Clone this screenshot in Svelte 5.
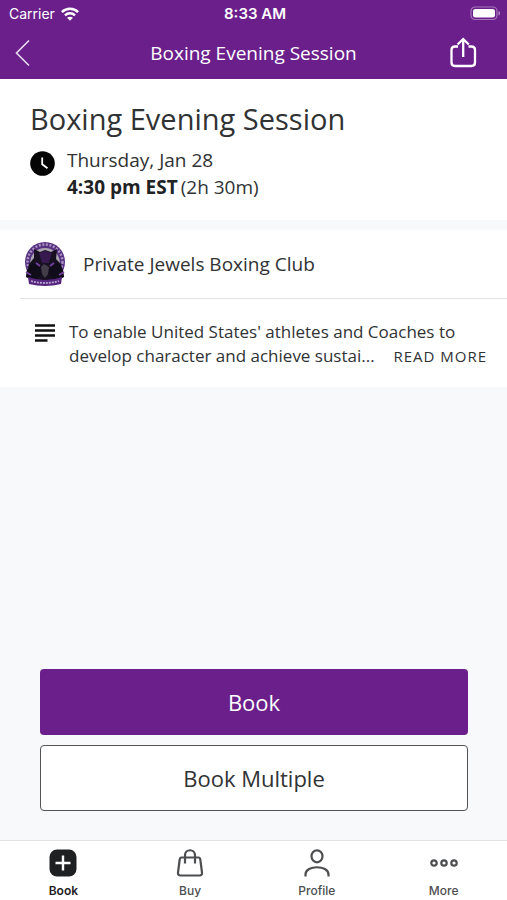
<script>
  let active = $state('Book');
  const tabs = ['Book', 'Buy', 'Profile', 'More'];
</script>

<div class="screen">
  <header>
    <div class="status">
      <div class="carrier">
        <span>Carrier</span>
        <svg width="18" height="14" viewBox="0 0 18 14" aria-hidden="true">
          <g fill="none" stroke="#fff" stroke-width="2.5">
            <path d="M.9 5.1C5.4.6 12.6.6 17.1 5.1" />
            <path d="M4 8.3C6.8 5.6 11.2 5.6 14 8.3" />
          </g>
          <path d="M9 13.7 6.1 10.8C7.7 9.3 10.3 9.3 11.9 10.8Z" fill="#fff" />
        </svg>
      </div>
      <span class="clock">8:33 AM</span>
      <svg class="battery" width="31" height="16" viewBox="0 0 31 16" aria-hidden="true">
        <rect x="1" y="1" width="26" height="12.5" rx="4" fill="none" stroke="#fff" stroke-opacity=".4" stroke-width="1.2" />
        <rect x="3" y="3" width="22" height="8.5" rx="2.3" fill="#fff" />
        <path d="M28.5 5c2 .7 2 3.9 0 4.6Z" fill="#fff" fill-opacity=".5" />
      </svg>
    </div>
    <nav class="bar" aria-label="Page">
      <button class="icon" aria-label="Back">
        <svg width="16" height="28" viewBox="0 0 16 28" aria-hidden="true">
          <path d="M14 1.5 1.5 14 14 26.5" fill="none" stroke="#fff" stroke-opacity=".85" stroke-width="1.6" />
        </svg>
      </button>
      <span class="bar-title">Boxing Evening Session</span>
      <button class="icon share" aria-label="Share">
        <svg width="28" height="32" viewBox="0 0 28 32" aria-hidden="true">
          <path d="M9 9.5H6Q2.5 9.5 2.5 13V25.5Q2.5 29 6 29H22.5Q26 29 26 25.5V13Q26 9.5 22.5 9.5H19.5M14.2 20V2.5M8.6 7.5 14.2 2 19.8 7.5" fill="none" stroke="#fff" stroke-width="2.3" />
        </svg>
      </button>
    </nav>
  </header>

  <main>
    <section class="summary">
      <h1>Boxing Evening Session</h1>
      <div class="when">
        <svg width="25" height="25" viewBox="0 0 25 25" aria-hidden="true">
          <circle cx="12.5" cy="12.5" r="12.3" fill="#050505" />
          <path d="M12.2 6.5V13.3L17.5 17.2" fill="none" stroke="#fff" stroke-width="1.8" />
        </svg>
        <p>Thursday, Jan 28<br /><span class="time"><strong>4:30 pm EST</strong><span>(2h 30m)</span></span></p>
      </div>
    </section>

    <section class="details">
      <div class="club">
        <svg width="42" height="46" viewBox="0 0 42 46" role="img" aria-label="Private Jewels Boxing Club emblem">
          <circle cx="21" cy="21" r="20" fill="#573181" />
          <circle cx="21" cy="21" r="17.5" fill="none" stroke="#a993c0" stroke-width="2.4" stroke-dasharray="2 1.6" />
          <circle cx="21" cy="22" r="15" fill="#aaa5af" />
          <path d="M10 17 10 8 16 11 21 9 27 11 33 8 32 18 37 23 40 36 30 41H12L2 36 5 23Z" fill="#171020" />
          <path d="M15 12 21 10 28 12 25 22H18Z" fill="#35194f" />
          <path d="M3 29 8 22 15 24 18 33 12 38 2 36ZM39 29 34 22 27 24 24 33 30 38 40 36Z" fill="#100c19" />
          <path d="M17 26 20 23 25 26 24 33 21 37 18 33Z" fill="#423d49" />
          <path d="M2 31 7 34M35 34 40 31M12 22 16 25M30 22 26 25" stroke="#7540a0" stroke-width="1.8" />
          <path d="M4 36Q21 42 38 36L37 43Q21 47 5 43Z" fill="#55257f" />
          <path d="M7 40Q21 44 35 40" fill="none" stroke="#b7a2cc" stroke-width="1.8" stroke-dasharray="2 1" />
        </svg>
        <span>Private Jewels Boxing Club</span>
      </div>
      <div class="about">
        <svg width="20" height="19" viewBox="0 0 20 19" aria-hidden="true">
          <path d="M0 1.5H20M0 6.5H20M0 11.5H20M0 16.5H12.5" stroke="#111" stroke-width="2.5" />
        </svg>
        <div class="copy">
          <p>To enable United States' athletes and Coaches to</p>
          <div class="last">
            <p>develop character and achieve sustai...</p>
            <button class="read">READ MORE</button>
          </div>
        </div>
      </div>
    </section>

    <div class="actions">
      <button class="primary">Book</button>
      <button class="secondary">Book Multiple</button>
    </div>
  </main>

  <nav class="tabs" aria-label="Main">
    {#each tabs as tab}
      <button class:active={active === tab} onclick={() => (active = tab)}>
        <svg width="28" height="28" viewBox="0 0 28 28" fill="none" stroke="currentColor" stroke-width="2.2" aria-hidden="true">
          {#if tab === 'Book'}
            <rect x=".5" y=".5" width="27" height="27" rx="7.5" fill="currentColor" stroke="none" />
            <path d="M14 6.5V21.5M6.5 14H21.5" stroke="#fff" stroke-width="2.4" />
          {:else if tab === 'Buy'}
            <path d="M5.5 8.5H22.5Q24 8.5 24.3 10.5L26 23.5Q26.3 26.5 23.5 26.5H4.5Q1.7 26.5 2 23.5L3.7 10.5Q4 8.5 5.5 8.5Z" />
            <path d="M9 14.5V6.5C9 -.5 19 -.5 19 6.5V14.5" />
          {:else if tab === 'Profile'}
            <ellipse cx="14" cy="7.3" rx="5.5" ry="6" />
            <path d="M2.5 27.5V25.5C2.5 15.8 25.5 15.8 25.5 25.5V27.5" />
          {:else}
            <circle cx="4" cy="14" r="2.7" />
            <circle cx="14" cy="14" r="2.7" />
            <circle cx="24" cy="14" r="2.7" />
          {/if}
        </svg>
        <span>{tab}</span>
      </button>
    {/each}
  </nav>
</div>

<style>
  :global(body) { margin: 0; }
  .screen {
    min-height: 100vh;
    display: flex;
    flex-direction: column;
    background: #f7f9fb;
    color: #303234;
    font-family: "Open Sans", "Noto Sans", sans-serif;
  }
  button {
    font: inherit;
    color: inherit;
    border: 0;
    padding: 0;
    background: none;
    cursor: pointer;
  }
  svg { display: block; flex: none; }
  p, h1 { margin: 0; }
  header { background: #6a1f8b; color: #fff; }
  .status {
    display: grid;
    grid-template-columns: 1fr auto 1fr;
    align-items: center;
    height: 27px;
    padding: 0 6px 0 9px;
    font: 14px/27px Inter, sans-serif;
  }
  .carrier { display: flex; align-items: center; gap: 6px; }
  .clock { font-size: 15px; font-weight: 600; }
  .battery { justify-self: end; }
  .bar {
    display: grid;
    grid-template-columns: 1fr auto 1fr;
    align-items: center;
    height: 52px;
    padding: 0 15px;
  }
  .bar-title { font-size: 19px; line-height: 28px; }
  .icon { justify-self: start; }
  .share { justify-self: end; margin-right: 15px; }
  .summary { background: #fff; padding: 20px 30px 19px; }
  h1 { font-size: 29px; font-weight: 400; line-height: 40px; }
  .when { display: flex; gap: 12px; padding-top: 8px; }
  .when svg { margin-top: 4px; }
  .when p { font-size: 19px; line-height: 27px; }
  strong { font-weight: 700; color: #202224; }
  .time { display: inline-flex; gap: 3px; }
  .details { background: #fff; margin-top: 10px; }
  .club {
    display: flex;
    align-items: center;
    gap: 17px;
    height: 68px;
    margin-left: 20px;
    padding-left: 4px;
    border-bottom: 1px solid #e2e3e5;
    font-size: 19px;
  }
  .about { display: flex; gap: 14px; padding: 21px 20px 19px 35px; }
  .about svg { margin-top: 4px; }
  .copy { flex: 1; font-size: 17px; line-height: 24px; }
  .last { display: flex; justify-content: space-between; }
  .read { font-size: 15px; line-height: 24px; letter-spacing: 1px; }
  main { flex: 1; display: flex; flex-direction: column; }
  .actions {
    display: flex;
    flex-direction: column;
    gap: 10px;
    margin-top: auto;
    padding: 20px 39px 29px 40px;
  }
  .actions button { height: 66px; border-radius: 4px; font-size: 22px; }
  .actions .primary { background: #6a1f8b; color: #fff; }
  .actions .secondary { background: #fff; border: 1px solid #515355; }
  .tabs {
    display: grid;
    grid-template-columns: repeat(4, 1fr);
    border-top: 1px solid #e1e3e6;
    background: #fff;
  }
  .tabs button {
    display: flex;
    flex-direction: column;
    align-items: center;
    gap: 5px;
    padding: 8px 0 1px;
    color: #4d4e50;
    font: 500 12px/17px Inter, sans-serif;
  }
  .tabs .active { color: #1e2022; font-weight: 600; }
</style>
